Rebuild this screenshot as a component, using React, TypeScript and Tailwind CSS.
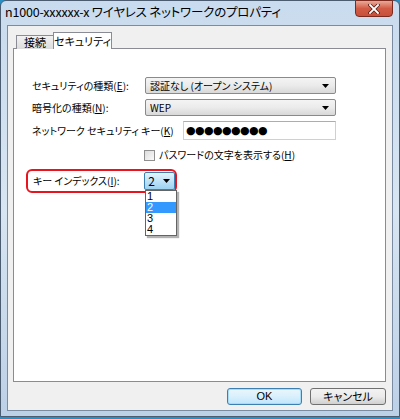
import React from 'react';

const jp = "font-['Noto_Sans_CJK_JP','Noto_Sans',sans-serif] [font-feature-settings:'palt']";

const ComboBox: React.FC<{ text: string; className?: string }> = ({ text, className }) => (
  <div
    className={`flex items-center justify-between h-[17px] rounded-[2px] border border-[#8a8a8a] bg-gradient-to-b from-[#f4f4f4] via-[#ebebeb] to-[#d8d8d8] pl-[4px] pr-[6px] ${className ?? ''}`}
  >
    <span className="text-[10px] leading-none text-black">{text}</span>
    <Arrow />
  </div>
);

const Arrow: React.FC = () => (
  <svg width="7" height="4" viewBox="0 0 7 4">
    <path d="M0 0h7L3.5 4z" fill="#000" />
  </svg>
);

const App: React.FC = () => {
  return (
    <div className={`w-[400px] h-[419px] bg-[#2b8fc4] ${jp}`}>
      <div className="w-[400px] h-[417px] flex flex-col rounded-t-[6px] border border-[#4b5b70] bg-gradient-to-b from-[#c9dbee] via-[#d8e5f2] to-[#bcd0e6] px-[6px] pb-[5px]">
        {/* title bar */}
        <div className="h-[24px] flex items-start justify-between">
          <span className="pt-[5px] -ml-[2px] text-[12.5px] leading-none text-black tracking-[-0.2px]">
            n1000-xxxxxx-x ワイヤレス ネットワークのプロパティ
          </span>
          <div className="w-[38px] h-[17px] -mt-px flex items-center justify-center rounded-b-[4px] border border-[#7b2a20] bg-gradient-to-b from-[#e9a898] via-[#d25b45] to-[#c8503b]">
            <svg width="12" height="10" viewBox="0 0 12 10">
              <path d="M2 1l8 8M10 1l-8 8" stroke="#5a2018" strokeWidth="3.4" strokeLinecap="square" />
              <path d="M2 1l8 8M10 1l-8 8" stroke="#ffffff" strokeWidth="1.8" strokeLinecap="square" />
            </svg>
          </div>
        </div>

        {/* client area */}
        <div className="flex-1 flex flex-col border border-[#7a8ca3] bg-[#f0f0f0] pt-[6px] pl-[5px] pr-[6px]">
          {/* tabs */}
          <div className="flex items-end h-[17px] pl-[3px] relative z-10">
            <div className="h-[14px] w-[38px] flex items-center justify-center border border-[#898c95] border-b-0 bg-gradient-to-b from-[#f2f2f2] to-[#dcdcdc] text-[11px] leading-none text-black">
              接続
            </div>
            <div className="h-[17px] w-[59px] -ml-px flex items-start justify-center pt-[3px] border border-[#898c95] border-b-0 bg-white text-[11px] leading-none text-black">
              セキュリティ
            </div>
          </div>

          {/* panel */}
          <div className="h-[334px] -mt-px border border-[#898c95] bg-white pl-[18px] pt-[28px] text-[10px] leading-none text-black">
            <div className="flex items-center h-[17px]">
              <span className="w-[113px]">
                セキュリティの種類(<u>E</u>):
              </span>
              <ComboBox text="認証なし (オープン システム)" className="w-[191px]" />
            </div>
            <div className="flex items-center h-[17px] mt-[5px]">
              <span className="w-[113px]">
                暗号化の種類(<u>N</u>):
              </span>
              <ComboBox text="WEP" className="w-[191px]" />
            </div>
            <div className="flex items-center h-[19px] mt-[5px]">
              <span className="w-[151px]">
                ネットワーク セキュリティ キー(<u>K</u>)
              </span>
              <div className="w-[153px] h-[19px] border border-[#c5d2df] border-t-[#abadb3] flex items-center pl-[2px] text-[11px] tracking-[-0.6px] font-['DejaVu_Sans',sans-serif]">
                ●●●●●●●●●
              </div>
            </div>
            <div className="flex items-center h-[12px] mt-[9px] pl-[112px]">
              <div className="w-[11px] h-[11px] border border-[#8f8f8f] bg-gradient-to-br from-[#dcdcdc] to-[#fafafa]" />
              <span className="ml-[4px]">
                パスワードの文字を表示する(<u>H</u>)
              </span>
            </div>

            {/* key index, highlighted */}
            <div className="relative mt-[8px] -ml-[6px] w-[151px] h-[24px] rounded-[6px] border-2 border-[#e8141e] flex items-center pl-[5px]">
              <span className="w-[112px]">
                キー インデックス(<u>I</u>):
              </span>
              <div className="w-[31px] h-[18px] flex items-center justify-between rounded-[2px] border border-[#3c7fb1] bg-gradient-to-b from-[#e6f4fc] via-[#bfe3f8] to-[#9cd2f1] pl-[3px] pr-[4px]">
                <span className="text-[12px] leading-none">2</span>
                <Arrow />
              </div>
              <div className="absolute left-[117px] top-[19px] w-[32px] border border-[#646464] bg-white shadow-[2px_2px_1px_rgba(0,0,0,0.3)] text-[11px] leading-[11px] font-['Liberation_Sans',sans-serif]">
                <div className="pl-[1px]">1</div>
                <div className="pl-[1px] bg-[#3399ff] text-white">2</div>
                <div className="pl-[1px]">3</div>
                <div className="pl-[1px]">4</div>
              </div>
            </div>
          </div>

          {/* buttons */}
          <div className="flex justify-end gap-[8px] mt-[6px] text-[11px] leading-none">
            <div className="w-[75px] h-[17px] flex items-center justify-center rounded-[3px] border border-[#3c7fb1] bg-gradient-to-b from-[#eaf6fd] via-[#d9f0fc] to-[#bee6fd] shadow-[inset_0_0_0_1px_#a8dcf6] font-['Liberation_Sans',sans-serif]">
              OK
            </div>
            <div className="w-[76px] h-[17px] flex items-center justify-center rounded-[3px] border border-[#707070] bg-gradient-to-b from-[#f2f2f2] via-[#ebebeb] to-[#d0d0d0]">
              キャンセル
            </div>
          </div>
        </div>
      </div>
    </div>
  );
};

export default App;
